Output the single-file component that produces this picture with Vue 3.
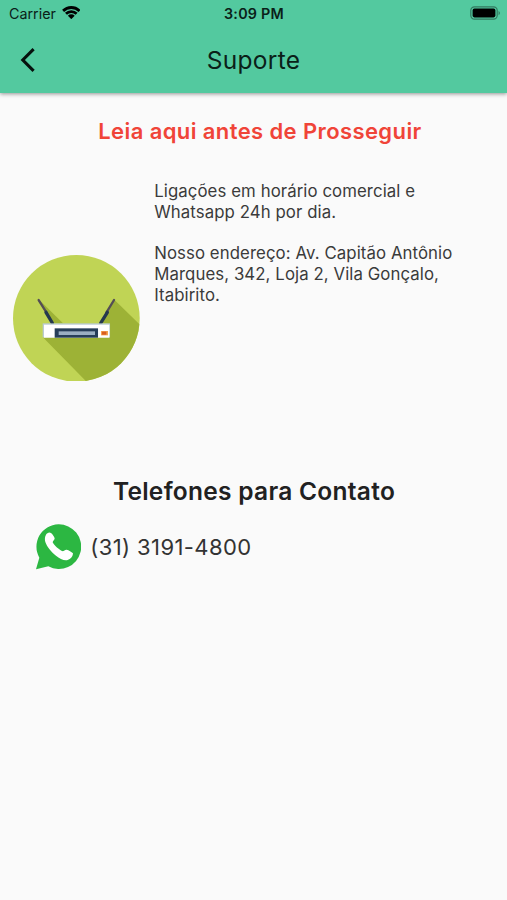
<script setup>
const phones = ['(31) 3191-4800']
const lines = [
  'Ligações em horário comercial e',
  'Whatsapp 24h por dia.',
  '',
  'Nosso endereço: Av. Capitão Antônio',
  'Marques, 342, Loja 2, Vila Gonçalo,',
  'Itabirito.',
]
</script>

<template>
  <div class="screen">
    <header class="header">
      <div class="status">
        <div class="carrier">
          <span>Carrier</span>
          <svg class="wifi" viewBox="0 0.8 18 12.8">
            <path d="M0.1 4.5A12.5 12.5 0 0 1 17.9 4.5L16 6.5A9.8 9.8 0 0 0 2 6.5Z" />
            <path d="M2.9 7.3A8.6 8.6 0 0 1 15.1 7.3L13.2 9.3A6 6 0 0 0 4.8 9.3Z" />
            <path d="M5.7 10.1A4.6 4.6 0 0 1 12.3 10.1L9 13.5Z" />
          </svg>
        </div>
        <span class="time">3:09 PM</span>
        <svg class="battery" viewBox="0 0 31 14">
          <rect x="0.8" y="0.8" width="26.4" height="12.4" rx="3.6" fill="none" stroke="#000" stroke-opacity=".4" stroke-width="1.2" />
          <rect x="2.6" y="2.6" width="22.8" height="8.8" rx="1.8" />
          <path d="M28.6 4.7Q31 7 28.6 9.3Z" fill-opacity=".45" />
        </svg>
      </div>
      <div class="bar">
        <svg class="back" viewBox="0 0 16 26">
          <path d="M13.6 2.2L2.8 13L13.6 23.8" fill="none" stroke="#06110d" stroke-width="3.1" />
        </svg>
        <h1 class="title">Suporte</h1>
      </div>
    </header>

    <main class="content">
      <h2 class="notice">Leia aqui antes de Prosseguir</h2>
      <section class="info">
        <svg class="router" viewBox="24 29 380 380">
          <defs>
            <clipPath id="disc"><circle cx="214" cy="219" r="190" /></clipPath>
          </defs>
          <circle cx="214" cy="219" r="190" fill="#c0d455" />
          <g clip-path="url(#disc)" fill="#9db236">
            <path d="M328 163L435 268V435H270L115 277L314 236L290 232Z" />
            <path d="M101 162L174 234H140Z" />
          </g>
          <g stroke-linecap="round">
            <path d="M101 164L126 204M327 164L304 202" stroke="#544e55" stroke-width="7" />
            <path d="M123 201L142 233M307 201L287 233" stroke="#25394e" stroke-width="10" />
          </g>
          <rect x="113" y="234" width="202" height="42" fill="#b9cbd2" />
          <rect x="117" y="238" width="196" height="39" fill="#fff" />
          <rect x="149" y="249" width="130" height="28" fill="#263e59" />
          <rect x="161" y="258" width="109" height="11" fill="#9aafc3" />
          <rect x="288" y="257" width="21" height="13" fill="#f4a04d" />
          <rect x="291" y="259" width="13" height="9" fill="#d85d20" />
        </svg>
        <p class="text">
          <span v-for="(line, i) in lines" :key="i" class="line">{{ line }}</span>
        </p>
      </section>
      <h2 class="contacts">Telefones para Contato</h2>
      <div v-for="phone in phones" :key="phone" class="phone">
        <svg class="whatsapp" viewBox="20 26 136 137">
          <path d="M87 27A67 67 0 1 1 57 153L20 162L30 127A67 67 0 0 1 87 27Z" fill="#2cb742" />
          <path d="M50 58C53 53 60 49 65 53C70 57 74 63 76 69C77 74 70 76 70 81C75 91 88 102 98 107C103 109 107 102 112 103C119 105 126 109 131 114C131 123 124 132 115 134C105 137 91 130 80 121C66 110 53 95 48 80C46 73 46 65 50 58Z" fill="#fff" />
        </svg>
        <span>{{ phone }}</span>
      </div>
    </main>
  </div>
</template>

<style>
body {
  background: #fafafa;
}
</style>

<style scoped>
.screen {
  height: 900px;
  overflow: hidden;
  background: #fafafa;
  color: #212121;
  font-family: Inter, "Liberation Sans", sans-serif;
}
.header {
  box-sizing: border-box;
  height: 93px;
  background: #53c99f;
  box-shadow: 0 1px 4px rgba(0, 0, 0, 0.42);
}
.status {
  display: grid;
  grid-template-columns: 1fr auto 1fr;
  align-items: center;
  height: 27px;
  padding: 0 6px 0 9px;
  color: #0a2018;
  font-size: 14.3px;
}
.carrier {
  display: flex;
  align-items: center;
  gap: 6px;
}
.wifi {
  width: 18.6px;
  height: 13.3px;
  margin-bottom: 2px;
  fill: #000;
}
.time {
  font-weight: 600;
  letter-spacing: 0.25px;
  margin-right: 2px;
}
.battery {
  justify-self: end;
  width: 31px;
  height: 14px;
  margin-bottom: 1px;
}
.bar {
  display: grid;
  grid-template-columns: 60px 1fr 60px;
  align-items: center;
  height: 66px;
}
.back {
  width: 16px;
  height: 26px;
  margin: 0 0 1px 20px;
}
.title {
  margin: 0;
  text-align: center;
  color: #0a2018;
  font-size: 24.5px;
  font-weight: 400;
  letter-spacing: 0.3px;
  line-height: 30px;
}
.content {
  display: flex;
  flex-direction: column;
}
.notice {
  margin: 24px 0 0 13px;
  text-align: center;
  color: #f04438;
  font-size: 22px;
  font-weight: 600;
  letter-spacing: 0.4px;
  line-height: 28px;
}
.info {
  display: flex;
  align-items: center;
  gap: 14.5px;
  height: 276px;
  margin-top: 35px;
  padding-left: 13px;
}
.router {
  flex: none;
  width: 126.7px;
  height: 126.7px;
}
.text {
  align-self: flex-start;
  margin: 0;
  padding-top: 1px;
  white-space: nowrap;
  color: #3b3b3b;
  font-size: 16.8px;
  letter-spacing: 0.08px;
  line-height: 20.8px;
}
.line {
  display: block;
  min-height: 20.8px;
}
.contacts {
  margin: 20px 0 0 1px;
  text-align: center;
  color: #212121;
  font-size: 24.5px;
  font-weight: 600;
  letter-spacing: 0.28px;
  line-height: 30px;
}
.phone {
  display: flex;
  align-items: center;
  gap: 9px;
  margin-top: 18px;
  padding-left: 36px;
  color: #333;
  font-size: 22px;
  letter-spacing: 0.4px;
}
.whatsapp {
  width: 45.3px;
  height: 45.7px;
}
</style>
